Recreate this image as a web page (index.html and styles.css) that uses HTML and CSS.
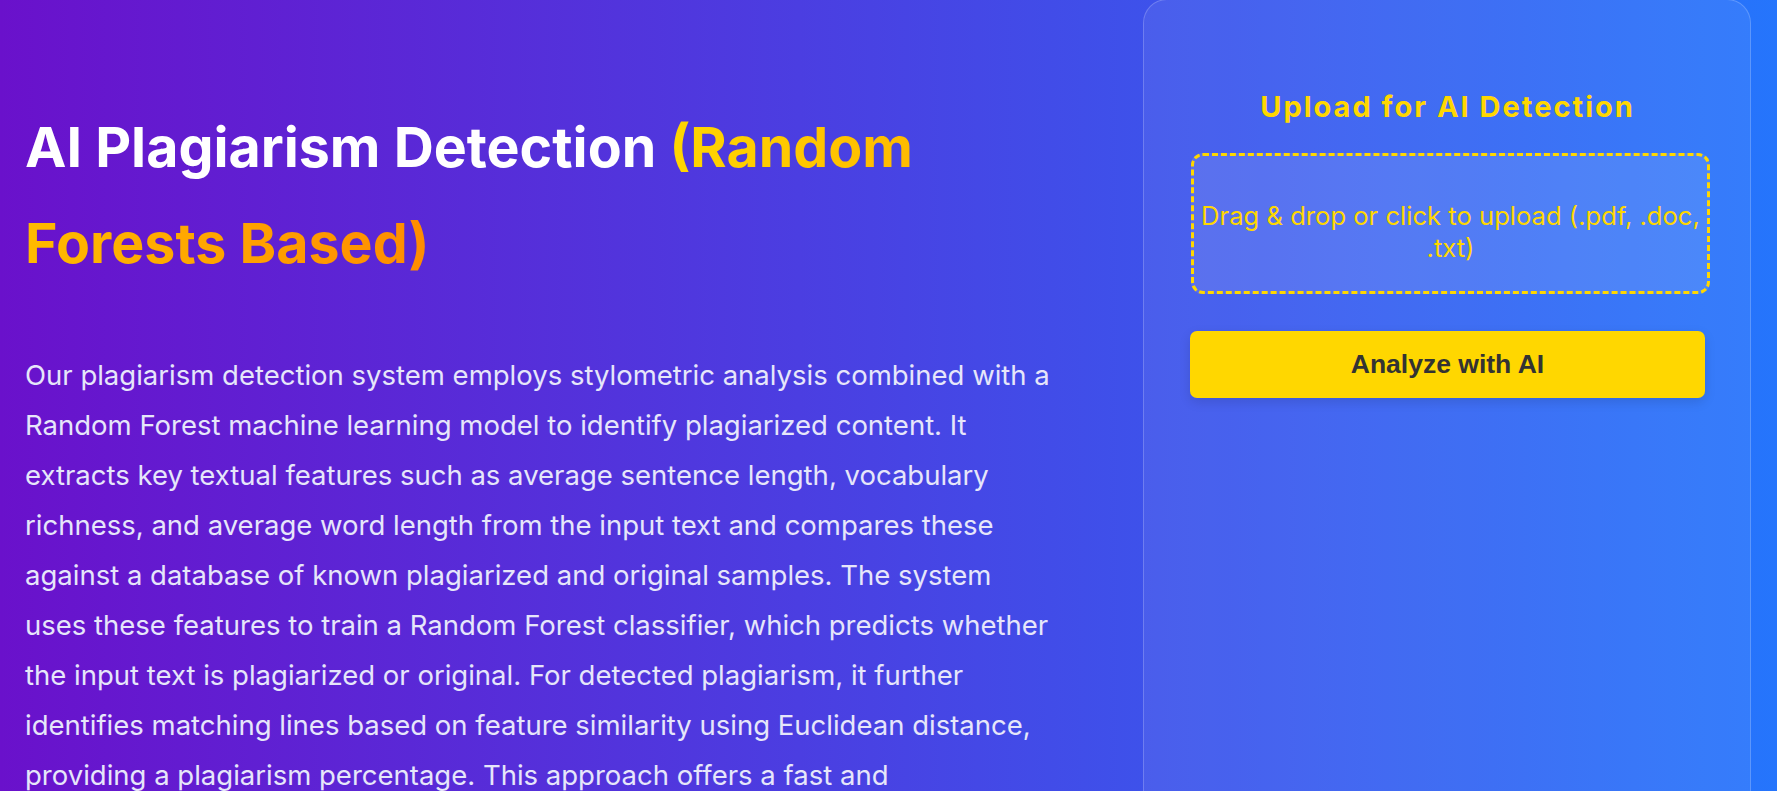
FILE: index.html
```html
<!DOCTYPE html>
<html lang="en">
<head>
<meta charset="utf-8">
<title>AI Plagiarism Detection</title>
<link rel="stylesheet" href="styles.css">
</head>
<body>
<main class="hero">
  <section class="intro">
    <h1 class="title">AI Plagiarism Detection <span class="accent">(Random Forests Based)</span></h1>
    <p class="desc">Our plagiarism detection system employs stylometric analysis combined with a Random Forest machine learning model to identify plagiarized content. It extracts key textual features such as average sentence length, vocabulary richness, and average word length from the input text and compares these against a database of known plagiarized and original samples. The system uses these features to train a Random Forest classifier, which predicts whether the input text is plagiarized or original. For detected plagiarism, it further identifies matching lines based on feature similarity using Euclidean distance, providing a plagiarism percentage. This approach offers a fast and interpretable way to detect plagiarism in academic and professional writing, helping educators and reviewers maintain originality and integrity.</p>
  </section>
  <aside class="card">
    <h2 class="card-title">Upload for AI Detection</h2>
    <label class="dropzone">Drag &amp; drop or click to upload (.pdf, .doc, .txt)</label>
    <button class="analyze" type="button">Analyze with AI</button>
  </aside>
</main>
</body>
</html>
```

FILE: styles.css
```css
html, body {
  margin: 0;
  padding: 0;
}
body {
  background: linear-gradient(to right, #6a11cb 0%, #2575fc 100%);
  font-family: Inter, "Noto Sans", sans-serif;
  color: #fff;
  overflow: hidden;
}
.hero {
  display: flex;
  align-items: stretch;
  padding: 0 27px 0 25px;
  gap: 83px;
}
.intro {
  width: 1035px;
  flex: none;
  padding-top: 99px;
}
.title {
  margin: 0;
  font-size: 55.5px;
  font-weight: 700;
  line-height: 96px;
  color: #fff;
}
.accent {
  background: linear-gradient(90deg, #ffd700 0%, #ff8c00 100%);
  -webkit-background-clip: text;
  background-clip: text;
  color: transparent;
  -webkit-box-decoration-break: slice;
  box-decoration-break: slice;
}
.desc {
  margin: 59px 0 0;
  font-size: 27.5px;
  line-height: 50px;
  color: #e6e6fa;
}
.card {
  flex: none;
  width: 515px;
  box-sizing: content-box;
  padding: 90px 45px 0 46px;
  background: rgba(255, 255, 255, 0.07);
  border: 1px solid rgba(255, 255, 255, 0.2);
  border-radius: 24px;
  display: flex;
  flex-direction: column;
  margin-top: -1px;
}
.card-title {
  margin: 0;
  text-align: center;
  font-size: 29px;
  font-weight: 700;
  line-height: 34px;
  color: #ffd700;
  letter-spacing: 2px;
}
.dropzone {
  display: block;
  margin: 29px -5px 0 1px;
  padding: 44px 2px 27px;
  border: 3px dashed #ffd700;
  border-radius: 12px;
  background: rgba(255, 255, 255, 0.1);
  color: #ffd700;
  font-size: 25.6px;
  line-height: 32px;
  text-align: center;
}
.analyze {
  margin-top: 37px;
  height: 67px;
  border: none;
  border-radius: 7px;
  background: #ffd700;
  color: #333;
  font-family: "Liberation Sans", Arial, sans-serif;
  font-weight: 700;
  font-size: 26.5px;
  box-shadow: 0 4px 12px rgba(0, 0, 0, 0.12);
}
```
